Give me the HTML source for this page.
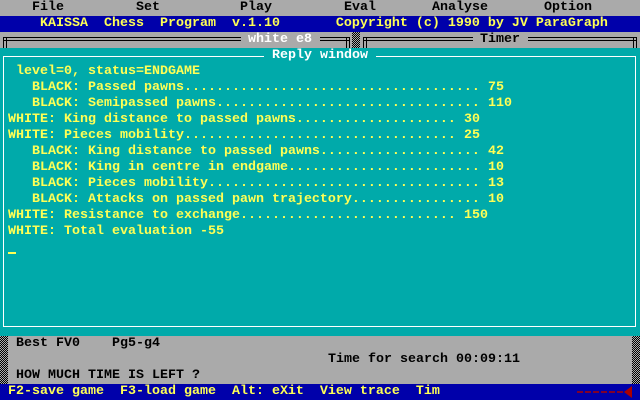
<!DOCTYPE html>
<html><head><meta charset="utf-8"><style>
*{margin:0;padding:0;box-sizing:border-box}
body{width:640px;height:400px;overflow:hidden;background:#aaa;position:relative;font-family:"Liberation Mono",monospace;font-size:13.33px;font-weight:bold;line-height:16px}
.t{position:absolute;white-space:pre;height:16px;overflow:hidden}
.bk{color:#000}.y{color:#ffff55}.w{color:#fff}
.band{position:absolute;left:0;width:640px}
.dl{position:absolute;border-top:1px solid #000;border-bottom:1px solid #000;height:4px}
.dv{position:absolute;border-left:1px solid #000;border-right:1px solid #000;width:4px}
.chk{position:absolute;background:repeating-conic-gradient(#000 0 25%,#aaa 0 50%) 0 0/2px 2px}
</style></head><body>
<div class="band" style="top:0;height:16px;background:#aaa"></div>
<div class="t bk" style="top:0;left:32px">File</div>
<div class="t bk" style="top:0;left:136px">Set</div>
<div class="t bk" style="top:0;left:240px">Play</div>
<div class="t bk" style="top:0;left:344px">Eval</div>
<div class="t bk" style="top:0;left:432px">Analyse</div>
<div class="t bk" style="top:0;left:544px">Option</div>
<div class="band" style="top:16px;height:16px;background:#0000aa"></div>
<div class="t y" style="top:16px;left:40px">KAISSA  Chess  Program  v.1.10       Copyright (c) 1990 by JV ParaGraph</div>

<div class="dl" style="top:37px;left:3px;width:238px"></div>
<div class="dv" style="top:37px;left:3px;height:11px;border-top:1px solid #000"></div>
<div class="t w" style="top:32px;left:248px">white e8</div>
<div class="dl" style="top:37px;left:320px;width:30px"></div>
<div class="dv" style="top:37px;left:346px;height:11px"></div>
<div class="chk" style="top:32px;left:352px;width:8px;height:16px"></div>
<div class="dl" style="top:37px;left:363px;width:110px"></div>
<div class="dv" style="top:37px;left:363px;height:11px"></div>
<div class="t bk" style="top:32px;left:480px">Timer</div>
<div class="dl" style="top:37px;left:528px;width:109px"></div>
<div class="dv" style="top:37px;left:633px;height:11px"></div>

<div class="band" style="top:48px;height:288px;background:#00aaaa"></div>
<div style="position:absolute;left:3px;top:56px;width:633px;height:271px;border:1px solid #fff"></div>
<div class="t w" style="top:48px;left:264px;background:#00aaaa"> Reply window </div>

<div class="t y" style="top:64px;left:16px">level=0, status=ENDGAME</div>
<div class="t y" style="top:80px;left:32px;width:448px">BLACK: Passed pawns....................................................</div><div class="t y" style="top:80px;left:488px">75</div>
<div class="t y" style="top:96px;left:32px;width:448px">BLACK: Semipassed pawns................................................</div><div class="t y" style="top:96px;left:488px">110</div>
<div class="t y" style="top:112px;left:8px;width:448px">WHITE: King distance to passed pawns..................................</div><div class="t y" style="top:112px;left:464px">30</div>
<div class="t y" style="top:128px;left:8px;width:448px">WHITE: Pieces mobility................................................</div><div class="t y" style="top:128px;left:464px">25</div>
<div class="t y" style="top:144px;left:32px;width:448px">BLACK: King distance to passed pawns..................................</div><div class="t y" style="top:144px;left:488px">42</div>
<div class="t y" style="top:160px;left:32px;width:448px">BLACK: King in centre in endgame......................................</div><div class="t y" style="top:160px;left:488px">10</div>
<div class="t y" style="top:176px;left:32px;width:448px">BLACK: Pieces mobility................................................</div><div class="t y" style="top:176px;left:488px">13</div>
<div class="t y" style="top:192px;left:32px;width:448px">BLACK: Attacks on passed pawn trajectory..............................</div><div class="t y" style="top:192px;left:488px">10</div>
<div class="t y" style="top:208px;left:8px;width:448px">WHITE: Resistance to exchange.........................................</div><div class="t y" style="top:208px;left:464px">150</div>
<div class="t y" style="top:224px;left:8px">WHITE: Total evaluation -55</div>
<div style="position:absolute;left:8px;top:252px;width:8px;height:2px;background:#ffff55"></div>

<div class="chk" style="top:336px;left:0;width:8px;height:48px"></div>
<div class="chk" style="top:336px;left:632px;width:8px;height:48px"></div>
<div class="t bk" style="top:336px;left:16px">Best FV0    Pg5-g4</div>
<div class="t bk" style="top:352px;left:328px">Time for search 00:09:11</div>
<div class="t bk" style="top:368px;left:16px">HOW MUCH TIME IS LEFT ?</div>

<div class="band" style="top:384px;height:16px;background:#0000aa"></div>
<div class="t y" style="top:384px;left:8px">F2-save game  F3-load game  Alt: eXit  View trace  Tim</div>
<svg style="position:absolute;left:576px;top:385px" width="64" height="15">
<line x1="1" y1="7" x2="50" y2="7" stroke="#aa0000" stroke-width="1.5" stroke-dasharray="6 2"/>
<polygon points="56,1 56,13 48,7" fill="#aa0000"/></svg>
</body></html>
